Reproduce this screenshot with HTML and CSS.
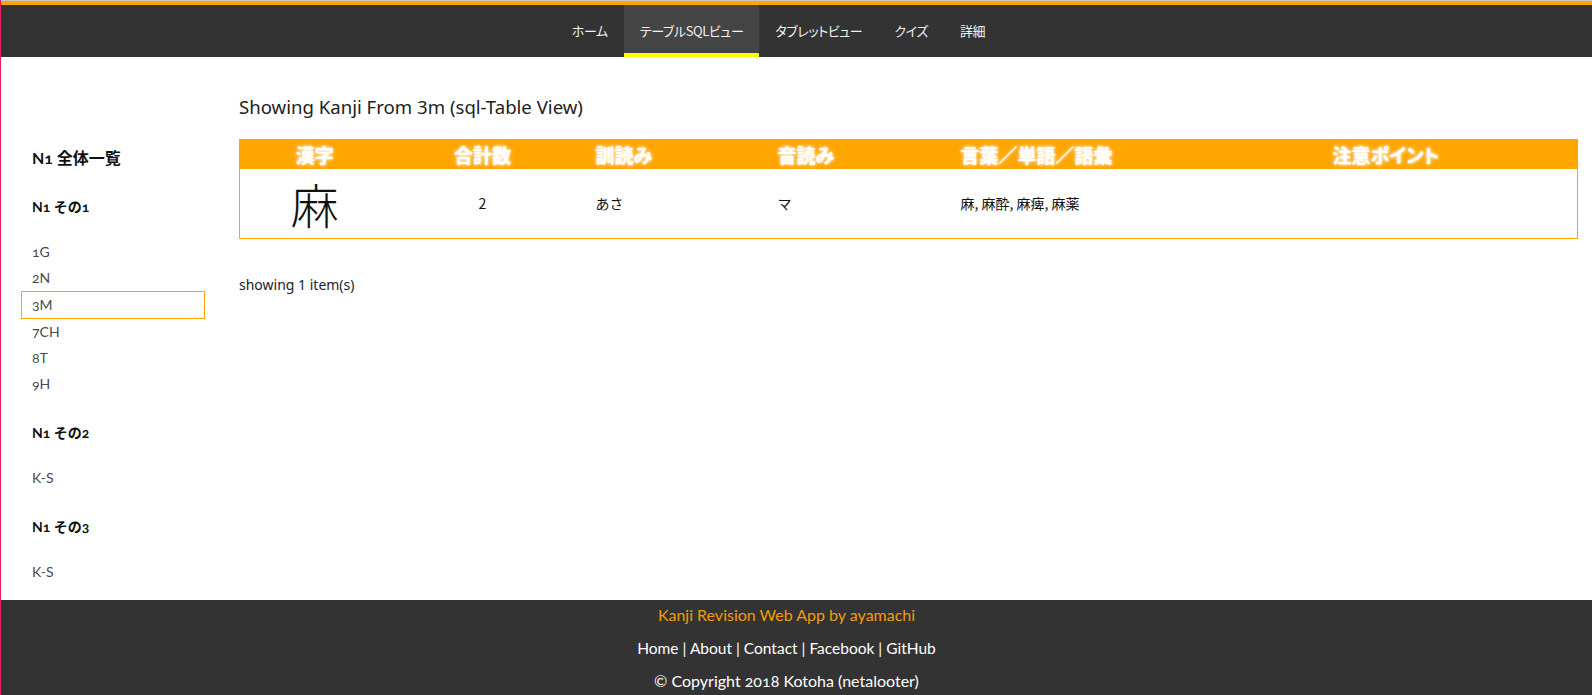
FILE: index.html
```html
<!DOCTYPE html>
<html lang="ja">
<head>
<meta charset="utf-8">
<title>Kanji Revision - Table SQL View</title>
<link rel="stylesheet" href="styles.css">
</head>
<body>
<div class="topline"></div>
<nav class="navbar">
  <ul class="nav-list">
    <li class="nav-item"><a href="#">ホーム</a></li>
    <li class="nav-item active"><a href="#">テーブルSQLビュー</a></li>
    <li class="nav-item"><a href="#">タブレットビュー</a></li>
    <li class="nav-item"><a href="#">クイズ</a></li>
    <li class="nav-item"><a href="#">詳細</a></li>
  </ul>
</nav>
<div class="layout">
  <aside class="sidebar">
    <h3 class="side-title">N1 全体一覧</h3>
    <h4 class="side-group">N1 その1</h4>
    <ul class="side-list">
      <li><a href="#">1G</a></li>
      <li><a href="#">2N</a></li>
      <li class="current"><a href="#">3M</a></li>
      <li><a href="#">7CH</a></li>
      <li><a href="#">8T</a></li>
      <li><a href="#">9H</a></li>
    </ul>
    <h4 class="side-group">N1 その2</h4>
    <ul class="side-list">
      <li><a href="#">K-S</a></li>
    </ul>
    <h4 class="side-group">N1 その3</h4>
    <ul class="side-list">
      <li><a href="#">K-S</a></li>
    </ul>
  </aside>
  <main class="main">
    <h2 class="page-title">Showing Kanji From 3m (sql-Table View)</h2>
    <table class="kanji-table">
      <colgroup>
        <col class="c-kanji">
        <col class="c-count">
        <col class="c-kun">
        <col class="c-on">
        <col class="c-words">
        <col class="c-note">
      </colgroup>
      <thead>
        <tr>
          <th class="center">漢字</th>
          <th class="center">合計数</th>
          <th>訓読み</th>
          <th>音読み</th>
          <th>言葉／単語／語彙</th>
          <th>注意ポイント</th>
        </tr>
      </thead>
      <tbody>
        <tr>
          <td class="center big-kanji">麻</td>
          <td class="center">2</td>
          <td>あさ</td>
          <td>マ</td>
          <td>麻, 麻酔, 麻痺, 麻薬</td>
          <td></td>
        </tr>
      </tbody>
    </table>
    <p class="count">showing 1 item(s)</p>
  </main>
</div>
<footer class="footer">
  <p class="credit">Kanji Revision Web App by ayamachi</p>
  <p class="links"><a href="#">Home</a> | <a href="#">About</a> | <a href="#">Contact</a> | <a href="#">Facebook</a> | <a href="#">GitHub</a></p>
  <p class="copy">© Copyright 2018 Kotoha (netalooter)</p>
</footer>
</body>
</html>
```
FILE: styles.css
```css
* { box-sizing: border-box; }

html, body { margin: 0; padding: 0; }

body {
  border-left: 1px solid #e91e63;
  background: #fff;
  color: #222;
  font-family: "Noto Sans", "Noto Sans CJK JP", sans-serif;
}

a { color: inherit; text-decoration: none; }

.topline {
  height: 1px;
  background: #c8c8c8;
}

.navbar {
  background: #333;
  border-top: 4px solid #ffa500;
}

.nav-list {
  list-style: none;
  margin: 0;
  padding: 0 36px 0 0;
  display: flex;
  justify-content: center;
  height: 52px;
}

.nav-item a {
  display: flex;
  align-items: center;
  height: 52px;
  padding: 0 16px 2px;
  color: #f2f2f2;
  font-family: "Noto Sans CJK JP", sans-serif;
  font-size: 13px;
  letter-spacing: -0.4px;
  font-feature-settings: "palt";
}

.nav-item.active a {
  background: #444;
  box-shadow: inset 0 -4px 0 #ffff00;
}

.layout {
  display: flex;
}

.sidebar {
  width: 238px;
  flex: none;
  padding: 89px 34px 15px 20px;
  font-family: "Lato", "Noto Sans CJK JP", sans-serif;
  font-variant-numeric: oldstyle-nums;
}

.side-title {
  margin: 0 0 27px;
  padding-left: 11px;
  font-size: 16px;
  line-height: 24px;
  font-weight: 700;
  color: #111;
}

.side-group {
  margin: 26px 0 22px;
  padding-left: 11px;
  font-size: 14px;
  line-height: 20px;
  font-weight: 700;
  color: #111;
}

.side-title + .side-group { margin-top: 0; }

.side-list {
  list-style: none;
  margin: 0;
  padding: 0;
}

.side-list li {
  line-height: 26px;
  font-size: 14px;
  color: #4a4a4a;
  padding-left: 11px;
}

.side-list li.current {
  border: 1px solid #ffa500;
  padding-left: 10px;
}

.main {
  flex: 1;
  padding: 37px 15px 0 0;
}

.page-title {
  margin: 0 0 19px;
  font-size: 18.6px;
  line-height: 26px;
  font-weight: 400;
  color: #222;
}

.kanji-table {
  width: 100%;
  table-layout: fixed;
  border-collapse: collapse;
  border: 1px solid #ffa500;
  font-family: "Noto Sans CJK JP", sans-serif;
}

.c-kanji { width: 150px; }
.c-count { width: 186px; }
.c-kun { width: 182px; }
.c-on { width: 183px; }
.c-words { width: 372px; }
.c-note { width: 265px; }

.kanji-table th {
  background: #ffa500;
  color: #fff;
  font-size: 19px;
  font-weight: 700;
  height: 29px;
  line-height: 29px;
  padding: 0 0 0 20px;
  text-align: left;
  text-shadow: 0 0 4px #fff, 0 0 2px #fff;
  font-feature-settings: "palt";
}

.kanji-table td {
  height: 69px;
  padding: 0 0 0 20px;
  font-size: 14px;
  color: #111;
  vertical-align: middle;
}

.kanji-table th.center,
.kanji-table td.center {
  text-align: center;
  padding: 0;
}

.kanji-table td.big-kanji {
  font-size: 48px;
  font-weight: 300;
  line-height: 1;
}

.count {
  margin: 36px 0 0;
  font-size: 14px;
  line-height: 20px;
  color: #222;
}

.footer {
  background: #333;
  height: 95px;
  padding: 5px 20px 0 0;
  text-align: center;
  font-family: "Lato", sans-serif;
  font-variant-numeric: oldstyle-nums;
  overflow: hidden;
}

.footer p {
  margin: 0 0 13px;
  line-height: 20px;
}

.credit {
  color: #f39a0c;
  font-size: 16px;
}

.links {
  color: #fff;
  font-size: 15.5px;
}

.copy {
  color: #fff;
  font-size: 16px;
}
```
